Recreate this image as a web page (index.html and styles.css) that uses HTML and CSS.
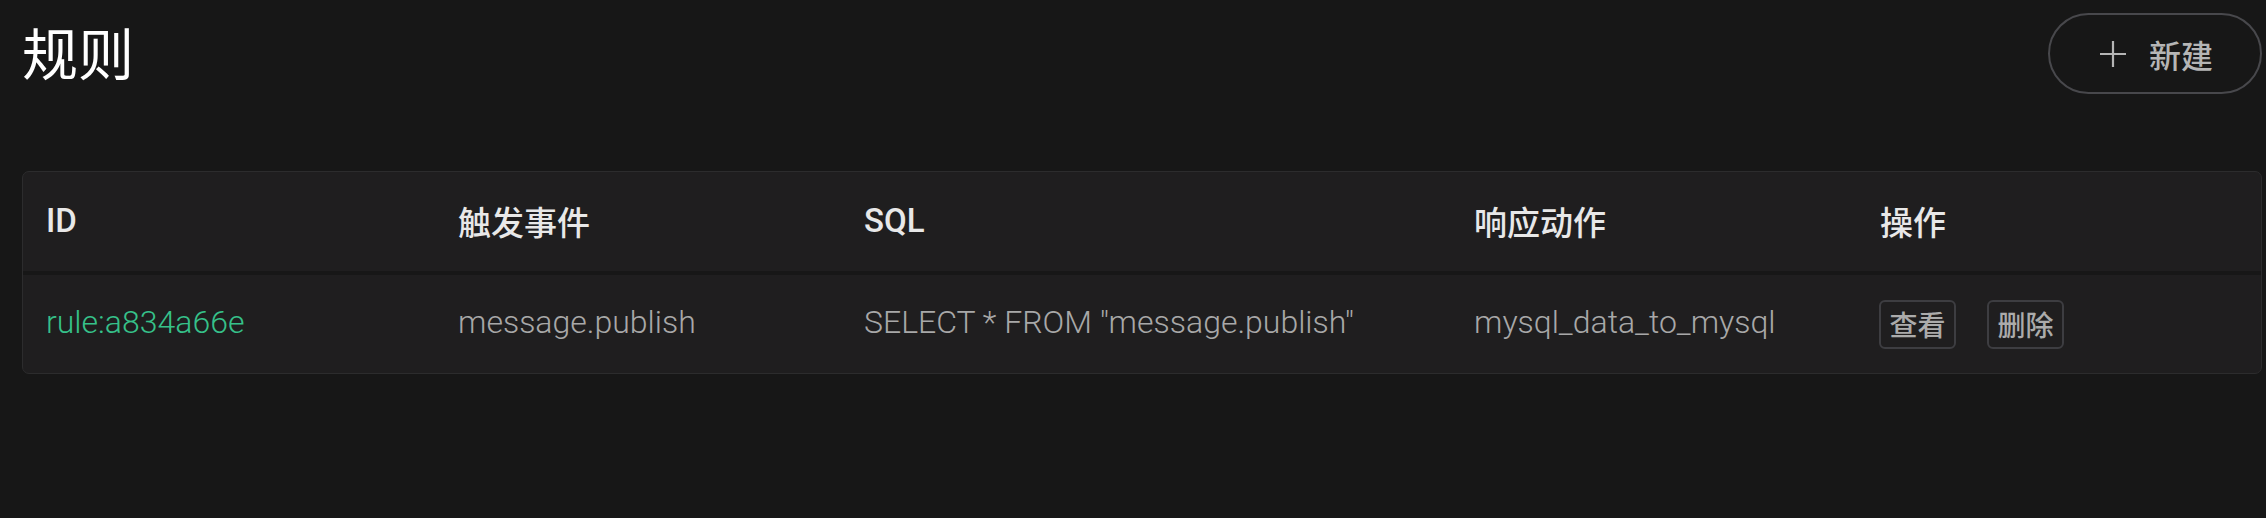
FILE: index.html
```html
<!DOCTYPE html>
<html lang="zh-CN">
<head>
<meta charset="utf-8">
<title>规则</title>
<link rel="stylesheet" href="styles.css">
</head>
<body>
<div class="page">
  <header class="page-head">
    <h1 class="title">规则</h1>
    <button class="btn-new" type="button">
      <svg class="plus" viewBox="0 0 26 26" width="26" height="26" aria-hidden="true">
        <path d="M13 0V26M0 13H26" stroke="currentColor" stroke-width="2.2" fill="none"/>
      </svg>
      <span>新建</span>
    </button>
  </header>

  <div class="card">
    <div class="row row-head">
      <div class="cell">ID</div>
      <div class="cell">触发事件</div>
      <div class="cell">SQL</div>
      <div class="cell">响应动作</div>
      <div class="cell">操作</div>
    </div>
    <div class="row row-body">
      <div class="cell"><a class="link" href="#">rule:a834a66e</a></div>
      <div class="cell">message.publish</div>
      <div class="cell">SELECT * FROM "message.publish"</div>
      <div class="cell">mysql_data_to_mysql</div>
      <div class="cell actions">
        <button class="btn-sm" type="button">查看</button>
        <button class="btn-sm" type="button">删除</button>
      </div>
    </div>
  </div>
</div>
</body>
</html>
```

FILE: styles.css
```css
* { box-sizing: border-box; }

html, body {
  margin: 0;
  background: #171717;
}

body {
  font-family: Roboto, "Noto Sans CJK SC", sans-serif;
  color: #e6e6e6;
  height: 518px;
  overflow: hidden;
}

.page {
  padding: 13px 4px 0 22px;
}

.page-head {
  display: flex;
  align-items: center;
  justify-content: space-between;
  height: 81px;
}

.title {
  margin: 0;
  padding-bottom: 6px;
  font-family: "Noto Sans CJK SC", sans-serif;
  font-size: 56px;
  font-weight: 400;
  line-height: 81px;
  color: #ffffff;
}

.btn-new {
  display: flex;
  align-items: center;
  gap: 23px;
  height: 81px;
  width: 214px;
  padding: 0 0 0 50px;
  border: 2px solid #48484c;
  border-radius: 41px;
  background: transparent;
  color: #b5b5b5;
  font-family: "Noto Sans CJK SC", sans-serif;
  font-size: 32px;
  font-weight: 500;
  cursor: pointer;
}

.plus { display: block; }

.card {
  margin-top: 77px;
  background: #1f1e1f;
  border: 1px solid #2c2c2d;
  border-radius: 7px;
  overflow: hidden;
}

.row {
  display: grid;
  grid-template-columns: 412px 406px 610px 406px 1fr;
  align-items: center;
}

.cell {
  padding: 0 22px 0 23px;
  white-space: nowrap;
}

.row-head {
  height: 103px;
  padding-bottom: 2px;
  border-bottom: 4px solid #171717;
  font-size: 33px;
  font-weight: 500;
  color: #e8e8e8;
}

.row-body {
  height: 98px;
  padding-bottom: 4px;
  font-size: 32px;
  font-weight: 300;
  color: #a8a8a8;
}

.link {
  color: #36c18a;
  text-decoration: none;
}

.actions {
  display: flex;
  gap: 31px;
  padding-top: 4px;
  padding-left: 22px;
}

.btn-sm {
  height: 49px;
  padding: 0 8.5px;
  background: transparent;
  border: 2px solid #3d3d41;
  border-radius: 6px;
  color: #ababab;
  font-family: "Noto Sans CJK SC", sans-serif;
  font-size: 28px;
  font-weight: 500;
  line-height: 1;
  cursor: pointer;
}
```
